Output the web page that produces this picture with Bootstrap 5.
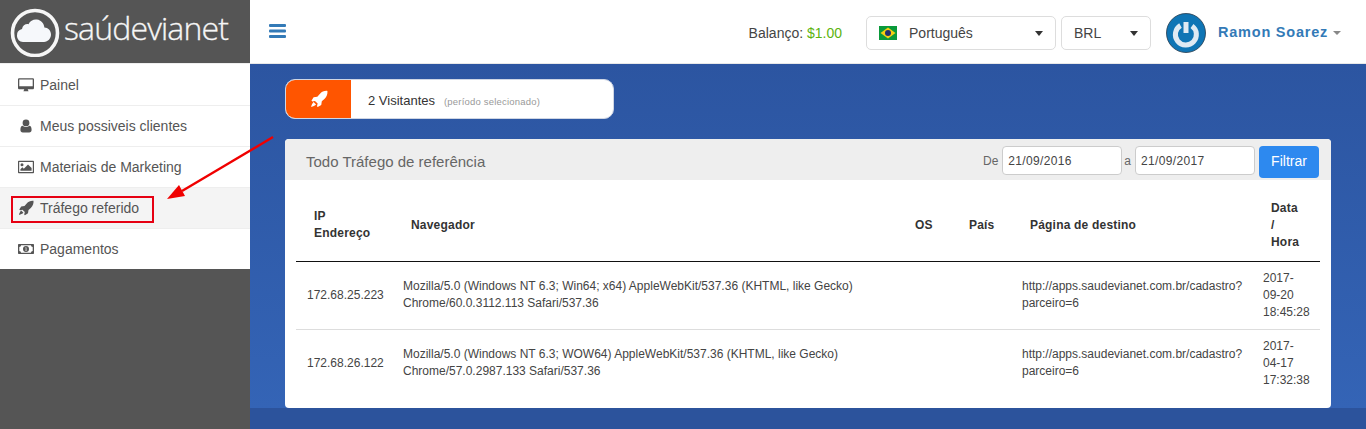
<!DOCTYPE html>
<html lang="pt">
<head>
<meta charset="utf-8">
<title>Tráfego referido</title>
<link href="https://cdn.jsdelivr.net/npm/bootstrap@5.3.0/dist/css/bootstrap.min.css" rel="stylesheet">
<style>
html,body{height:429px;overflow:hidden}
body{font-family:"Liberation Sans",Arial,sans-serif;font-size:14px;color:#333;background:#fff;position:relative}
.side{width:250px;flex:none;background:#555;height:429px}
.brand{height:63px;background:#555;color:#f6f6f6;padding-left:10px;gap:4px}
.brand-txt{font-family:"Open Sans",sans-serif;font-weight:300;font-size:32px;letter-spacing:-.85px;line-height:56px;height:63px;-webkit-text-stroke:.3px #f6f6f6}
.menu-list{background:#fff;padding-top:1px;border-top:1px solid #eee}
.menu-item{height:41px;padding-left:18px;gap:6px;color:#555;border-bottom:1px solid #eee;text-decoration:none;font-size:14px}
.menu-item:last-child{border-bottom:0;height:40px}
.menu-item.on{background:#f4f4f4;border-top:1px solid #eee;margin-top:-1px;height:42px}
.menu-item svg{width:16px;height:16px;fill:#555;flex:none}
.mainw{flex:1 1 auto;min-width:0;height:429px}
.topb{height:64px;background:#fff;border-bottom:1px solid #e8e8e8;padding:3px 0 0 19px}
.burger{width:17px;height:14px;margin-top:-4px;fill:#337ab7}
.bal{margin-left:auto;margin-right:24px;font-size:14px;color:#444}
.bal b{font-weight:400;color:#5cb30f}
.sel{height:34px;border:1px solid #ddd;border-radius:5px;background:#fff;font-size:14px;color:#444;padding:0 12px;display:flex;align-items:center}
.sel-l{width:190px;margin-right:5px}
.sel-c{width:90px;margin-right:15px}
.sel .arr{margin-left:auto;border-top:5px solid #333;border-left:4px solid transparent;border-right:4px solid transparent}
.flag{width:18px;height:14px;margin-right:12px}
.ava{width:40px;height:40px;margin-right:12px;flex:none}
.who{font-weight:700;color:#337ab7;font-size:14.5px;letter-spacing:.77px;margin-right:25px;white-space:nowrap}
.who i{display:inline-block;vertical-align:middle;margin-left:5px;border-top:4px solid #888;border-left:4px solid transparent;border-right:4px solid transparent}
.blue{height:344px;background:linear-gradient(180deg,#2c55a1,#3464b6);padding:15px 35px 0}
.stat{width:329px;height:40px;background:#fff;border:1px solid #cfd6e4;border-radius:10px;overflow:hidden;margin-bottom:20px}
.stat-ic{width:65px;height:100%;background:#f50;flex:none}
.stat-ic svg{width:18px;height:18px;fill:#fff}
.stat-n{margin-left:17px;font-size:13px;color:#333;padding-top:4px}
.stat-s{margin-left:9px;font-size:9.5px;color:#999;letter-spacing:.2px;padding-top:6px}
.panel{width:1046px;height:269px;border:0;border-radius:4px;overflow:hidden}
.panel-h{height:41px;background:#eee;padding:0 12px 0 21px}
.panel-t{font-size:15px;color:#666;margin-right:auto;padding-top:6px}
.lbl{font-size:12px;color:#666;padding-top:2px}
.dt{width:120px;height:29px;margin:2px 2px 0 4px;border:1px solid #ccc;border-radius:4px;background:#fff;font-size:12px;color:#444;padding:0 5px;letter-spacing:.35px}
.dt2{margin:2px 4px 0 4px}
.go{height:32px;width:60px;margin-top:4px;background:#2d89ef;border:0;border-radius:4px;color:#fff;font-size:14px;padding:0}
.twrap{padding:0 11px}
.tb{table-layout:fixed;width:1024px;margin:0;font-size:12px;line-height:17px;color:#444}
.tb th{height:81px;vertical-align:middle;padding:10px 0 0 19px;font-weight:700;color:#333;letter-spacing:.2px;border-bottom:1px solid #111}
.tb th:first-child{padding:10px 20px 0 18px}
.tb td{vertical-align:middle;padding:7px 0 7px 11px;height:68px;border-bottom:1px solid #ddd;color:#444}
.tb td:last-child{padding-right:10px}
.tb tr:last-child td{border-bottom:0}
.c1{width:96px}.c2{width:504px}.c3{width:54px}.c4{width:61px}.c5{width:241px}.c6{width:68px}
.foot{height:21px;background:#2c539c}
.mark-box{position:absolute;left:11px;top:196px;width:143px;height:27px;border:2px solid #e60012}
.arrow{position:absolute;left:160px;top:130px;width:120px;height:76px}
</style>
</head>
<body>
<div class="d-flex">
  <aside class="side">
    <div class="brand d-flex align-items-center">
      <svg width="50" height="50" viewBox="0 0 50 50"><circle cx="25" cy="26" r="22.5" fill="none" stroke="#f6f6f6" stroke-width="3.6"/><path d="M13 35a6.600 6.600 0 0 1-1-13c.6-3.4 3.600-5.400 6.500-4.800 1.800-3.600 5-5 8.400-4.600 4.300.600 7 3.800 7.500 8 3.600.200 6.600 3 6.600 7 0 4-3 7.400-7 7.400z" fill="#f6f8fb"/></svg>
      <span class="brand-txt">saúdevianet</span>
    </div>
    <nav class="menu-list d-flex flex-column">
      <a class="menu-item d-flex align-items-center" href="#"><svg viewBox="0 0 16 16"><path d="M0 2.500C0 1.700.6 1.200 1.300 1.200h13.400c.7 0 1.300.5 1.300 1.300v8.400c0 .7-.6 1.300-1.300 1.300H9.800c0 .8.500 1.200.800 2H5.400c.3-.8.800-1.200.800-2H1.300C.6 12.200 0 11.600 0 10.900zm1.300 0v6.700h13.400V2.500z"/></svg>Painel</a>
      <a class="menu-item d-flex align-items-center" href="#"><svg viewBox="0 0 16 16"><path d="M8 1.500a3.400 3.400 0 1 1 0 6.800 3.400 3.400 0 0 1 0-6.800zM4.700 7.800c.9.9 2 1.300 3.300 1.300s2.400-.4 3.300-1.300c1.400.1 2.300 1.500 2.300 4 0 1.700-.9 2.700-2.400 2.700H4.800c-1.500 0-2.400-1-2.400-2.700 0-2.500.9-3.900 2.300-4z"/></svg>Meus possiveis clientes</a>
      <a class="menu-item d-flex align-items-center" href="#"><svg viewBox="0 0 16 16"><path d="M.8 1.800h14.400c.5 0 .8.300.8.800v10.800c0 .5-.3.800-.8.800H.8c-.5 0-.8-.3-.8-.8V2.600c0-.5.300-.8.800-.8zm.4 1.200v10h13.600V3zM4 4.200a1.500 1.500 0 1 1 0 3 1.500 1.500 0 0 1 0-3zM2.400 11.800v-1.500L4.400 8.300l1.400 1.400L10 5.500l3.600 3.600v2.700z"/></svg>Materiais de Marketing</a>
      <a class="menu-item on d-flex align-items-center" href="#"><svg viewBox="0 0 16 16"><path d="M15.500.800c.2 2.800-.5 5.100-2.700 7.200l-2.300 2-.5 3.300-3.100 1.900-.7-.8.600-2.300-2.400-2.400-2.300.6-.8-.7L3.200 6.500l3.300-.5 2-2.300C10.600 1.400 12.700.6 15.500.800zM3.200 10.600l2.200 2.200c-.9 1-2.700 1.900-4.400 2.200.3-1.700 1.200-3.500 2.200-4.400z"/></svg>Tráfego referido</a>
      <a class="menu-item d-flex align-items-center" href="#"><svg viewBox="0 0 16 16"><path d="M.7 3h14.600c.4 0 .7.300.7.700v8.600c0 .4-.3.700-.7.700H.7c-.4 0-.7-.3-.7-.7V3.700c0-.4.300-.7.700-.7zM3 4.300c0 .9-.8 1.700-1.700 1.700v4c.9 0 1.700.8 1.700 1.700h10c0-.9.800-1.700 1.700-1.700V6c-.9 0-1.700-.8-1.700-1.700zM8 5a3 3 0 1 1 0 6 3 3 0 0 1 0-6zM7.300 6.400v.6h.4v2h-.5v.6h1.700V9h-.5V6.400z" fill-rule="evenodd"/></svg>Pagamentos</a>
    </nav>
  </aside>
  <div class="mainw d-flex flex-column">
    <header class="topb d-flex align-items-center">
      <svg class="burger" viewBox="0 0 17 14"><rect width="17" height="3" y="0" rx="1"/><rect width="17" height="3" y="5.500" rx="1"/><rect width="17" height="3" y="11" rx="1"/></svg>
      <span class="bal">Balanço: <b>$1.00</b></span>
      <div class="sel sel-l">
        <svg class="flag" viewBox="0 0 18 14"><rect width="18" height="14" fill="#0a9a3a"/><path d="M9 1.500 16.500 7 9 12.500 1.500 7z" fill="#f5cf12"/><circle cx="9" cy="7" r="3" fill="#23306f"/></svg>
        <span>Português</span><span class="arr"></span>
      </div>
      <div class="sel sel-c"><span>BRL</span><span class="arr"></span></div>
      <svg class="ava" viewBox="0 0 40 40"><circle cx="20" cy="20" r="19.500" fill="#0f75b5" stroke="#243a4d" stroke-width=".8"/><path d="M14.500 12.500a10.500 10.500 0 1 0 11.500.500" fill="none" stroke="#dfeaf3" stroke-width="5"/><path d="M20 9v11" stroke="#dfeaf3" stroke-width="5" fill="none"/></svg>
      <span class="who">Ramon Soarez<i></i></span>
    </header>
    <main class="blue">
      <div class="stat d-flex align-items-center">
        <div class="stat-ic d-flex align-items-center justify-content-center"><svg viewBox="0 0 16 16"><path d="M15.500.800c.2 2.800-.5 5.100-2.700 7.200l-2.300 2-.5 3.300-3.100 1.900-.7-.8.600-2.300-2.400-2.400-2.300.6-.8-.7L3.200 6.500l3.300-.5 2-2.300C10.600 1.400 12.700.6 15.500.800zM3.200 10.600l2.200 2.200c-.9 1-2.700 1.900-4.400 2.200.3-1.700 1.200-3.500 2.200-4.400z"/></svg></div>
        <span class="stat-n">2 Visitantes</span><span class="stat-s">(período selecionado)</span>
      </div>
      <section class="card panel">
        <div class="panel-h d-flex align-items-center">
          <span class="panel-t">Todo Tráfego de referência</span>
          <span class="lbl">De</span>
          <input class="dt" type="text" value="21/09/2016">
          <span class="lbl">a</span>
          <input class="dt dt2" type="text" value="21/09/2017">
          <button class="go" type="button">Filtrar</button>
        </div>
        <div class="twrap">
          <table class="table tb">
            <colgroup><col class="c1"><col class="c2"><col class="c3"><col class="c4"><col class="c5"><col class="c6"></colgroup>
            <thead><tr><th>IP Endereço</th><th>Navegador</th><th>OS</th><th>País</th><th>Página de destino</th><th>Data<br>/<br>Hora</th></tr></thead>
            <tbody>
              <tr><td>172.68.25.223</td><td>Mozilla/5.0 (Windows NT 6.3; Win64; x64) AppleWebKit/537.36 (KHTML, like Gecko) Chrome/60.0.3112.113 Safari/537.36</td><td></td><td></td><td>http://apps.saudevianet.com.br/cadastro?parceiro=6</td><td>2017-09-20 18:45:28</td></tr>
              <tr><td>172.68.26.122</td><td>Mozilla/5.0 (Windows NT 6.3; WOW64) AppleWebKit/537.36 (KHTML, like Gecko) Chrome/57.0.2987.133 Safari/537.36</td><td></td><td></td><td>http://apps.saudevianet.com.br/cadastro?parceiro=6</td><td>2017-04-17 17:32:38</td></tr>
            </tbody>
          </table>
        </div>
      </section>
    </main>
    <div class="foot"></div>
  </div>
</div>
<div class="mark-box"></div>
<svg class="arrow" viewBox="0 0 120 76"><path d="M113 7 22 61" stroke="#f00000" stroke-width="2.400" fill="none"/><path d="M7 69 19 55 25 66z" fill="#f00000"/></svg>
<script src="https://cdn.jsdelivr.net/npm/bootstrap@5.3.0/dist/js/bootstrap.bundle.min.js"></script>
</body>
</html>
